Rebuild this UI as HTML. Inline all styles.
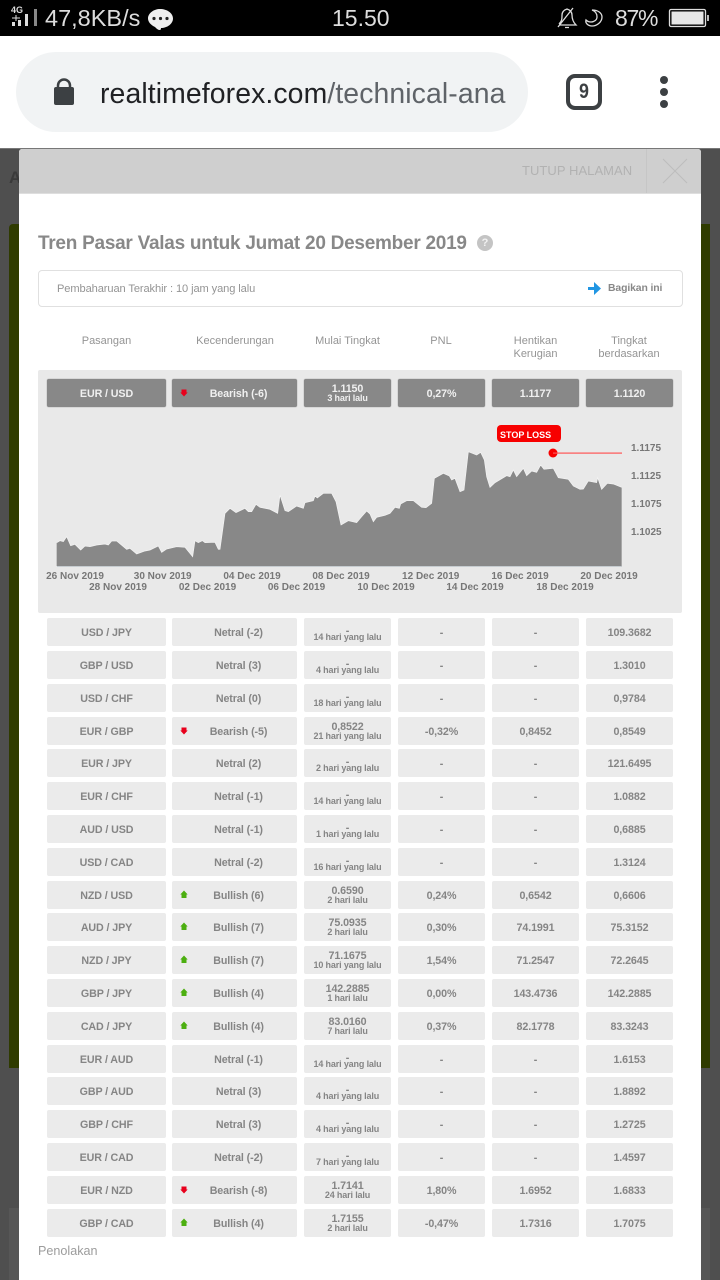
<!DOCTYPE html>
<html><head><meta charset="utf-8"><title>Tren Pasar Valas</title>
<style>
html,body{margin:0;padding:0;width:720px;height:1280px;overflow:hidden;background:#4f4f4f;font-family:"Liberation Sans",sans-serif}
div,span{position:absolute;white-space:nowrap}
#root{left:0;top:0;width:720px;height:1280px;overflow:hidden}
#st{left:0;top:0;width:720px;height:36px;background:#000;color:#ddd;font-size:23px;line-height:36px}
#bar{left:0;top:36px;width:720px;height:112px;background:#fff}
#pill{left:16px;top:16px;width:512px;height:80px;border-radius:40px;background:#f1f3f4}
#url{left:100px;top:40px;width:408px;overflow:hidden;font-size:28.4px;line-height:36px;color:#202124;letter-spacing:.1px}
#url i{font-style:normal;color:#5f6368}
#modal{left:19px;top:149px;width:682px;height:1131px;background:#fff;border-radius:3px 3px 0 0}
#in{left:0;top:0;width:720px;height:1280px;filter:blur(.35px)}
.h{top:335px;font-size:11px;line-height:13px;color:#949494;white-space:pre;text-align:center;transform:translateX(-50%)}
.r{left:0;width:720px;height:28px}
.r div{height:28px;background:#ebebeb;border-radius:2px;top:0}
.r .a{left:47px;width:119px}.r .b{left:172px;width:125px}.r .c{left:304px;width:87px}
.r .e{left:398px;width:87px}.r .f{left:492px;width:87px}.r .g{left:586px;width:87px}
.r div{font-size:10.7px;line-height:30px;font-weight:700;color:#858585;text-align:center;letter-spacing:-.1px}
.r .b{padding-left:8px;width:117px}
.r .c span{left:0;width:87px;text-align:center}
.r .c .n{top:3px;line-height:14px;font-size:10.7px}
.r .c .d{top:6px;line-height:14px;font-size:10.7px}
.r .c .s{top:13px;line-height:12px;font-size:9px;letter-spacing:-.15px}
.r svg{position:absolute;left:7.500px;top:9px}
.top div{background:#888;color:#f0f0f0;box-shadow:0 0 1px #777}
.ax{font-size:10px;font-weight:700;color:#777;line-height:12px;transform:translateX(-50%)}
.yl{left:631px;font-size:10px;font-weight:700;color:#777;line-height:12px}
</style></head><body><div id="root">

<div id="st">
<span style="left:11px;top:5px;font-size:9px;line-height:10px;font-weight:700;color:#ddd">4G</span>
<svg style="position:absolute;left:0;top:0" width="180" height="36">
<rect x="12" y="22" width="3" height="4" fill="#ddd"/><rect x="18" y="20" width="3" height="6" fill="#ddd"/><rect x="25" y="14" width="3" height="12" fill="#ddd"/><rect x="34" y="9" width="3" height="17" fill="#888"/>
<path d="M12 18h8M16 15v6" stroke="#ddd" stroke-width="1"/>
<path d="M160 9c7 0 13 4 13 9.500s-6 9.500-12 9.500c0 0 0 2-1 2-2 0-3-1-5-3-4-2-7-5-7-8.500 0-5.500 6-9.500 12-9.500z" fill="#eee"/>
<circle cx="154" cy="18.500" r="1.600" fill="#222"/><circle cx="160.500" cy="18.500" r="1.600" fill="#222"/><circle cx="167" cy="18.500" r="1.600" fill="#222"/>
</svg>
<span style="left:45px;top:0;font-size:23.500px">47,8KB/s</span>
<span style="left:332px;top:0">15.50</span>
<span style="left:615px;top:0;letter-spacing:-1.300px">87%</span>
<svg style="position:absolute;left:540px;top:0" width="180" height="36" fill="none" stroke="#ddd" stroke-width="1.300">
<path d="M19 24c3-3 3-5 3-9 0-3 2-5 5-6 3 1 5 3 5 6 0 4 1 7 4 10H19M18 27 33 8M25 27.500h4"/>
<path d="M52 10c3 1 5 3 5 7 0 3-3 5-6 5-2 0-4-1-5-2-1 3 2 6 6 6 5 0 10-4 10-9 0-4-4-7-10-7z"/>
<rect x="129.500" y="9.500" width="36" height="17" rx="1.500"/><rect x="131.500" y="11.500" width="32" height="13" fill="#e6e6e6" stroke="none"/><rect x="167" y="15" width="2" height="6" fill="#bbb" stroke="none"/>
</svg>
</div>

<div id="bar">
<div id="pill"></div>
<svg style="position:absolute;left:0;top:0" width="720" height="112">
<path d="M58 53v-3.500a6 6 0 0 1 12 0V53" fill="none" stroke="#3c4043" stroke-width="2.500"/>
<rect x="54" y="51" width="20" height="18" rx="2" fill="#3c4043"/>
<rect x="568" y="40" width="32" height="32" rx="7" fill="none" stroke="#3c4043" stroke-width="4"/>
<circle cx="664" cy="44" r="4" fill="#3c4043"/><circle cx="664" cy="56" r="4" fill="#3c4043"/><circle cx="664" cy="68" r="4" fill="#3c4043"/>
</svg>
<span style="left:567px;top:40px;width:34px;text-align:center;font-size:21px;line-height:32px;font-weight:700;color:#3c4043;transform:scaleX(.85)">9</span>
<div id="url">realtimeforex.com<i>/technical-ana</i></div>
</div>

<div style="left:0;top:148px;width:720px;height:1px;background:#777"></div>
<div style="left:9px;top:224px;width:10px;height:844px;background:#2f3b00;border-radius:4px 0 0 0"></div>
<div style="left:701px;top:224px;width:9px;height:844px;background:#2f3b00"></div>
<div style="left:9px;top:1208px;width:10px;height:72px;background:#575757"></div>
<div style="left:701px;top:1208px;width:9px;height:72px;background:#575757"></div>
<div style="left:9px;top:170px;font-size:17px;font-weight:700;color:#3a3a3a;line-height:16px">A</div>

<div id="modal"></div>
<div id="in">
<div style="left:19px;top:149px;width:682px;height:44px;background:#cfcfcf;border-radius:3px 3px 0 0;border-bottom:1px solid #dedede"></div>
<div style="left:646px;top:149px;width:1px;height:44px;background:#c6c6c6"></div>
<div style="left:522px;top:163px;font-size:13px;line-height:16px;color:#b2b2b2;letter-spacing:.05px">TUTUP HALAMAN</div>
<svg style="position:absolute;left:660px;top:156px" width="30" height="30"><path d="M3 3 27 27M27 3 3 27" stroke="#bdbdbd" stroke-width="1"/></svg>

<div style="left:38px;top:232px;font-size:19px;line-height:23px;font-weight:700;color:#888;letter-spacing:-.26px">Tren Pasar Valas untuk Jumat 20 Desember 2019</div>
<div style="left:477px;top:235px;width:16px;height:16px;border-radius:8px;background:#c4c4c4;color:#f2f2f2;font-size:11px;font-weight:700;line-height:16px;text-align:center">?</div>

<div style="left:38px;top:270px;width:643px;height:35px;border:1px solid #e0e0e0;border-radius:4px"></div>
<div style="left:57px;top:282px;font-size:11.100px;line-height:14px;color:#949494;letter-spacing:-.1px">Pembaharuan Terakhir : 10 jam yang lalu</div>
<svg style="position:absolute;left:588px;top:281px" width="14" height="15"><path d="M0 6h6V1l7 6.500-7 6.500V9H0z" fill="#2196e3"/></svg>
<div style="left:608px;top:282px;font-size:10.400px;line-height:14px;font-weight:700;color:#888;letter-spacing:-.1px">Bagikan ini</div>

<div class="h" style="left:106.500px">Pasangan</div>
<div class="h" style="left:235px">Kecenderungan</div>
<div class="h" style="left:347.500px">Mulai Tingkat</div>
<div class="h" style="left:441px">PNL</div>
<div class="h" style="left:535.500px">Hentikan
Kerugian</div>
<div class="h" style="left:629px">Tingkat
berdasarkan</div>

<div style="left:38px;top:370px;width:644px;height:243px;background:#e9e9e9;border-radius:2px"></div>

<div class="r top" style="top:379px"><div class="a">EUR / USD</div><div class="b"><svg width="8" height="9"><path d="M4 8.500 .3 4.500H1.500V1.500H6.500V4.500H7.700z" fill="#e8001c"/></svg>Bearish (-6)</div><div class="c"><span class="n">1.1150</span><span class="s">3 hari lalu</span></div><div class="e">0,27%</div><div class="f">1.1177</div><div class="g">1.1120</div></div>

<svg style="position:absolute;left:0;top:0" width="720" height="620">
<g transform="translate(30,410) scale(.33333)">
<polygon fill="#888" points="80,468 80,398 90,392 100,395 110,380 122,407 135,403 152,420 165,408 180,410 200,405 225,402 235,405 245,393 260,393 290,418 300,415 320,432 345,423 360,420 385,408 395,427 410,417 440,410 465,412 488,440 495,392 505,398 517,392 525,398 555,397 565,418 570,418 585,310 600,295 618,308 645,295 655,305 665,305 678,283 690,292 720,298 743,310 750,255 765,302 775,305 800,288 820,295 825,278 850,272 855,258 862,264 880,250 905,250 918,275 933,345 955,332 980,338 995,320 1010,303 1020,312 1030,335 1040,322 1065,316 1080,310 1095,292 1108,295 1112,282 1130,272 1150,272 1175,292 1188,293 1205,280 1213,205 1240,190 1258,198 1265,210 1275,205 1290,245 1302,240 1315,125 1340,135 1352,127 1363,150 1370,200 1380,232 1395,218 1430,197 1440,200 1450,180 1460,200 1480,175 1490,197 1505,183 1520,187 1532,165 1542,178 1570,175 1585,203 1615,208 1630,228 1650,238 1660,237 1675,213 1700,218 1703,203 1715,238 1732,220 1750,222 1775,232 1775,468"/>
<polyline fill="none" stroke="#f4f4f4" stroke-width="2" points="80,398 90,392 100,395 110,380 122,407 135,403 152,420 165,408 180,410 200,405 225,402 235,405 245,393 260,393 290,418 300,415 320,432 345,423 360,420 385,408 395,427 410,417 440,410 465,412 488,440 495,392 505,398 517,392 525,398 555,397 565,418 570,418 585,310 600,295 618,308 645,295 655,305 665,305 678,283 690,292 720,298 743,310 750,255 765,302 775,305 800,288 820,295 825,278 850,272 855,258 862,264 880,250 905,250 918,275 933,345 955,332 980,338 995,320 1010,303 1020,312 1030,335 1040,322 1065,316 1080,310 1095,292 1108,295 1112,282 1130,272 1150,272 1175,292 1188,293 1205,280 1213,205 1240,190 1258,198 1265,210 1275,205 1290,245 1302,240 1315,125 1340,135 1352,127 1363,150 1370,200 1380,232 1395,218 1430,197 1440,200 1450,180 1460,200 1480,175 1490,197 1505,183 1520,187 1532,165 1542,178 1570,175 1585,203 1615,208 1630,228 1650,238 1660,237 1675,213 1700,218 1703,203 1715,238 1732,220 1750,222 1775,232"/>
</g>
<rect x="57" y="566" width="565" height="1" fill="#c6ccd0"/>
<rect x="497" y="425" width="64" height="17" rx="4" fill="#f70000"/>
<circle cx="553" cy="453" r="4.500" fill="#f70000"/>
<rect x="553" y="452.500" width="69" height="1.200" fill="#f55"/>
</svg>
<div style="left:500px;top:429px;font-size:9px;line-height:12px;font-weight:700;color:#fff">STOP LOSS</div>
<div style="left:46px;top:571px;width:60px;height:14px;overflow:hidden"><span class="ax" style="left:29px;top:0">26 Nov 2019</span></div>
<div class="ax" style="left:162.700px;top:571px">30 Nov 2019</div>
<div class="ax" style="left:252px;top:571px">04 Dec 2019</div>
<div class="ax" style="left:341px;top:571px">08 Dec 2019</div>
<div class="ax" style="left:430.700px;top:571px">12 Dec 2019</div>
<div class="ax" style="left:520px;top:571px">16 Dec 2019</div>
<div class="ax" style="left:609px;top:571px">20 Dec 2019</div>
<div class="ax" style="left:118px;top:582px">28 Nov 2019</div>
<div class="ax" style="left:207.500px;top:582px">02 Dec 2019</div>
<div class="ax" style="left:296.500px;top:582px">06 Dec 2019</div>
<div class="ax" style="left:386px;top:582px">10 Dec 2019</div>
<div class="ax" style="left:475px;top:582px">14 Dec 2019</div>
<div class="ax" style="left:565px;top:582px">18 Dec 2019</div>
<div class="yl" style="top:443px">1.1175</div>
<div class="yl" style="top:471px">1.1125</div>
<div class="yl" style="top:499px">1.1075</div>
<div class="yl" style="top:527px">1.1025</div>

<div class="r" style="top:618px"><div class="a">USD / JPY</div><div class="b">Netral (-2)</div><div class="c"><span class="d">-</span><span class="s">14 hari yang lalu</span></div><div class="e">-</div><div class="f">-</div><div class="g">109.3682</div></div>
<div class="r" style="top:651px"><div class="a">GBP / USD</div><div class="b">Netral (3)</div><div class="c"><span class="d">-</span><span class="s">4 hari yang lalu</span></div><div class="e">-</div><div class="f">-</div><div class="g">1.3010</div></div>
<div class="r" style="top:684px"><div class="a">USD / CHF</div><div class="b">Netral (0)</div><div class="c"><span class="d">-</span><span class="s">18 hari yang lalu</span></div><div class="e">-</div><div class="f">-</div><div class="g">0,9784</div></div>
<div class="r" style="top:717px"><div class="a">EUR / GBP</div><div class="b"><svg width="8" height="9"><path d="M4 8.500 .3 4.500H1.500V1.500H6.500V4.500H7.700z" fill="#e8001c"/></svg>Bearish (-5)</div><div class="c"><span class="n">0,8522</span><span class="s">21 hari yang lalu</span></div><div class="e">-0,32%</div><div class="f">0,8452</div><div class="g">0,8549</div></div>
<div class="r" style="top:749px"><div class="a">EUR / JPY</div><div class="b">Netral (2)</div><div class="c"><span class="d">-</span><span class="s">2 hari yang lalu</span></div><div class="e">-</div><div class="f">-</div><div class="g">121.6495</div></div>
<div class="r" style="top:782px"><div class="a">EUR / CHF</div><div class="b">Netral (-1)</div><div class="c"><span class="d">-</span><span class="s">14 hari yang lalu</span></div><div class="e">-</div><div class="f">-</div><div class="g">1.0882</div></div>
<div class="r" style="top:815px"><div class="a">AUD / USD</div><div class="b">Netral (-1)</div><div class="c"><span class="d">-</span><span class="s">1 hari yang lalu</span></div><div class="e">-</div><div class="f">-</div><div class="g">0,6885</div></div>
<div class="r" style="top:848px"><div class="a">USD / CAD</div><div class="b">Netral (-2)</div><div class="c"><span class="d">-</span><span class="s">16 hari yang lalu</span></div><div class="e">-</div><div class="f">-</div><div class="g">1.3124</div></div>
<div class="r" style="top:881px"><div class="a">NZD / USD</div><div class="b"><svg width="8" height="9"><path d="M4 .5 7.700 4.500H6.500V8H1.500V4.500H.3z" fill="#4caf10"/></svg>Bullish (6)</div><div class="c"><span class="n">0.6590</span><span class="s">2 hari lalu</span></div><div class="e">0,24%</div><div class="f">0,6542</div><div class="g">0,6606</div></div>
<div class="r" style="top:913px"><div class="a">AUD / JPY</div><div class="b"><svg width="8" height="9"><path d="M4 .5 7.700 4.500H6.500V8H1.500V4.500H.3z" fill="#4caf10"/></svg>Bullish (7)</div><div class="c"><span class="n">75.0935</span><span class="s">2 hari lalu</span></div><div class="e">0,30%</div><div class="f">74.1991</div><div class="g">75.3152</div></div>
<div class="r" style="top:946px"><div class="a">NZD / JPY</div><div class="b"><svg width="8" height="9"><path d="M4 .5 7.700 4.500H6.500V8H1.500V4.500H.3z" fill="#4caf10"/></svg>Bullish (7)</div><div class="c"><span class="n">71.1675</span><span class="s">10 hari yang lalu</span></div><div class="e">1,54%</div><div class="f">71.2547</div><div class="g">72.2645</div></div>
<div class="r" style="top:979px"><div class="a">GBP / JPY</div><div class="b"><svg width="8" height="9"><path d="M4 .5 7.700 4.500H6.500V8H1.500V4.500H.3z" fill="#4caf10"/></svg>Bullish (4)</div><div class="c"><span class="n">142.2885</span><span class="s">1 hari lalu</span></div><div class="e">0,00%</div><div class="f">143.4736</div><div class="g">142.2885</div></div>
<div class="r" style="top:1012px"><div class="a">CAD / JPY</div><div class="b"><svg width="8" height="9"><path d="M4 .5 7.700 4.500H6.500V8H1.500V4.500H.3z" fill="#4caf10"/></svg>Bullish (4)</div><div class="c"><span class="n">83.0160</span><span class="s">7 hari lalu</span></div><div class="e">0,37%</div><div class="f">82.1778</div><div class="g">83.3243</div></div>
<div class="r" style="top:1045px"><div class="a">EUR / AUD</div><div class="b">Netral (-1)</div><div class="c"><span class="d">-</span><span class="s">14 hari yang lalu</span></div><div class="e">-</div><div class="f">-</div><div class="g">1.6153</div></div>
<div class="r" style="top:1077px"><div class="a">GBP / AUD</div><div class="b">Netral (3)</div><div class="c"><span class="d">-</span><span class="s">4 hari yang lalu</span></div><div class="e">-</div><div class="f">-</div><div class="g">1.8892</div></div>
<div class="r" style="top:1110px"><div class="a">GBP / CHF</div><div class="b">Netral (3)</div><div class="c"><span class="d">-</span><span class="s">4 hari yang lalu</span></div><div class="e">-</div><div class="f">-</div><div class="g">1.2725</div></div>
<div class="r" style="top:1143px"><div class="a">EUR / CAD</div><div class="b">Netral (-2)</div><div class="c"><span class="d">-</span><span class="s">7 hari yang lalu</span></div><div class="e">-</div><div class="f">-</div><div class="g">1.4597</div></div>
<div class="r" style="top:1176px"><div class="a">EUR / NZD</div><div class="b"><svg width="8" height="9"><path d="M4 8.500 .3 4.500H1.500V1.500H6.500V4.500H7.700z" fill="#e8001c"/></svg>Bearish (-8)</div><div class="c"><span class="n">1.7141</span><span class="s">24 hari lalu</span></div><div class="e">1,80%</div><div class="f">1.6952</div><div class="g">1.6833</div></div>
<div class="r" style="top:1209px"><div class="a">GBP / CAD</div><div class="b"><svg width="8" height="9"><path d="M4 .5 7.700 4.500H6.500V8H1.500V4.500H.3z" fill="#4caf10"/></svg>Bullish (4)</div><div class="c"><span class="n">1.7155</span><span class="s">2 hari lalu</span></div><div class="e">-0,47%</div><div class="f">1.7316</div><div class="g">1.7075</div></div>

<div style="left:38px;top:1244px;font-size:12.600px;line-height:15px;color:#9c9c9c">Penolakan</div>
</div>
</div></body></html>
